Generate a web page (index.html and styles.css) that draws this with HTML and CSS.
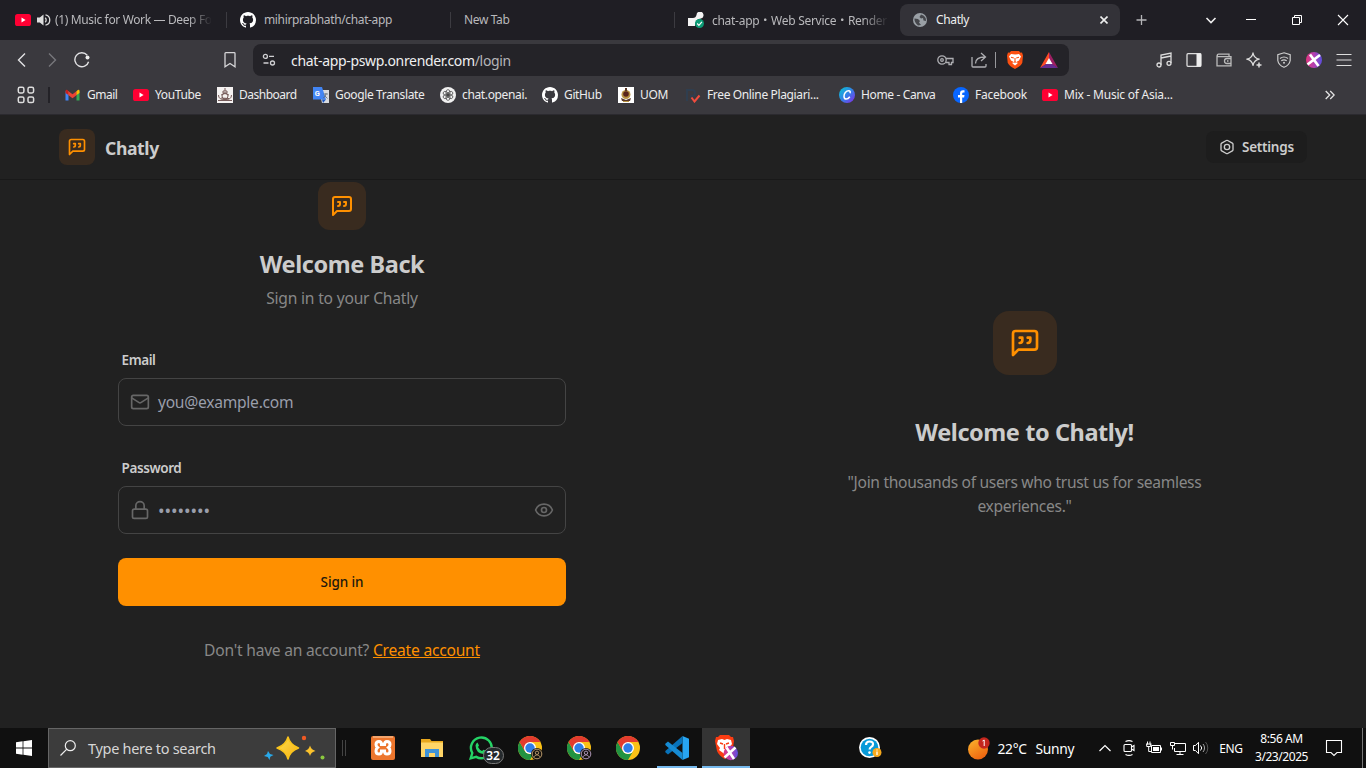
FILE: index.html
```html
<!DOCTYPE html>
<html lang="en">
<head>
<meta charset="utf-8">
<title>Chatly</title>
<link rel="stylesheet" href="styles.css">
</head>
<body>
<svg class="defs" aria-hidden="true">
  <symbol id="yt" viewBox="0 0 16 16"><rect y="2" width="16" height="12" rx="2.6" fill="#ff0033"/><path d="M6.5 5.6 10.6 8l-4.1 2.4z" fill="#fff"/></symbol>
  <symbol id="gh" viewBox="0 0 16 16"><path fill="#fff" d="M8 0C3.58 0 0 3.58 0 8c0 3.54 2.29 6.53 5.47 7.59.4.07.55-.17.55-.38 0-.19-.01-.82-.01-1.49-2.01.37-2.53-.49-2.69-.94-.09-.23-.48-.94-.82-1.13-.28-.15-.68-.52-.01-.53.63-.01 1.08.58 1.23.82.72 1.21 1.87.87 2.33.66.07-.52.28-.87.51-1.07-1.78-.2-3.64-.89-3.64-3.95 0-.87.31-1.59.82-2.15-.08-.2-.36-1.02.08-2.12 0 0 .67-.21 2.2.82.64-.18 1.32-.27 2-.27s1.36.09 2 .27c1.53-1.04 2.2-.82 2.2-.82.44 1.1.16 1.92.08 2.12.51.56.82 1.27.82 2.15 0 3.07-1.87 3.75-3.65 3.95.29.25.54.73.54 1.48 0 1.07-.01 1.93-.01 2.2 0 .21.15.46.55.38A8.01 8.01 0 0 0 16 8c0-4.42-3.58-8-8-8z"/></symbol>
  <symbol id="quote" viewBox="0 0 24 24"><g fill="none" stroke="currentColor" stroke-width="2" stroke-linecap="round" stroke-linejoin="round"><path d="M21 15a2 2 0 0 1-2 2H7l-4 4V5a2 2 0 0 1 2-2h14a2 2 0 0 1 2 2z"/><path d="M8 12a2 2 0 0 0 2-2V8H8"/><path d="M14 12a2 2 0 0 0 2-2V8h-2"/></g></symbol>
  <symbol id="chrome" viewBox="0 0 24 24"><circle cx="12" cy="12" r="12" fill="#fbc116"/><path d="M1.6 6 6.8 15a6 6 0 0 0 10.4 0L12 24A12 12 0 0 1 1.6 6z" fill="#229342"/><path d="M22.4 6H12L6.800 15 1.6 6A12 12 0 0 1 22.4 6z" fill="#e33b2e"/><circle cx="12" cy="12" r="6" fill="#fff"/><circle cx="12" cy="12" r="4.7" fill="#2f7de9"/></symbol>
  <symbol id="face" viewBox="0 0 12 12"><circle cx="6" cy="6" r="6" fill="#171310"/><circle cx="6" cy="6" r="4.8" fill="none" stroke="currentColor"/><circle cx="6" cy="4.8" r="1.7" fill="none" stroke="currentColor"/><path d="M3 9.3c.6-3.2 5.400-3.200 6 0" fill="none" stroke="currentColor"/></symbol>
  <linearGradient id="gPurple" x1="0" y1="0" x2="1" y2="0"><stop offset="0" stop-color="#e0357e"/><stop offset=".5" stop-color="#b33fb0"/><stop offset="1" stop-color="#5b4ee0"/></linearGradient>
  <linearGradient id="gCanva" x1="0" y1="0" x2="1" y2="1"><stop offset="0" stop-color="#05c7cf"/><stop offset=".5" stop-color="#3480e8"/><stop offset="1" stop-color="#8a25e6"/></linearGradient>
  <linearGradient id="gSun" x1="0" y1="0" x2=".6" y2="1"><stop offset="0" stop-color="#fbb52d"/><stop offset="1" stop-color="#ee6510"/></linearGradient>
  <linearGradient id="gStar" x1="0" y1="0" x2="1" y2="1"><stop offset="0" stop-color="#ffe04e"/><stop offset="1" stop-color="#f6ae12"/></linearGradient>
</svg>

<div class="tabs">
  <div class="tab tab-a"><svg width="16" height="16"><use href="#yt"/></svg><svg class="snd" width="14" height="14" viewBox="0 0 14 14"><path d="M0 4.500h2.800L6.500 1.500v11L2.800 9.500H0z" fill="#ddd"/><path d="M8.200 4.800a3 3 0 0 1 0 4.400M8.500 1.800a5.300 5.300 0 0 1 0 10.400" fill="none" stroke="#ddd" stroke-width="1.300"/></svg><span class="fade t-music">(1) Music for Work — Deep Fo</span></div>
  <div class="tab tab-b"><svg width="16" height="16"><use href="#gh"/></svg><span class="t-repo">mihirprabhath/chat-app</span></div>
  <div class="tab tab-c"><span class="t-new">New Tab</span></div>
  <div class="tab tab-d"><svg width="16" height="16" viewBox="0 0 16 16"><path d="M0 6h5c2 0 3-1 3.500-3A3.500 3.500 0 1 1 13 6.500C10 7 7.500 8 7 14H0z" fill="#f4f4f4"/><circle cx="11.500" cy="11.500" r="4.500" fill="#0b9b75"/><path d="m9.200 11.500 1.700 1.800 3-3.500" fill="none" stroke="#fff" stroke-width="1.200"/></svg><span class="fade t-render">chat-app・Web Service・Render</span></div>
  <div class="tab active"><svg width="14" height="14" viewBox="0 0 14 14"><circle cx="7" cy="7" r="7" fill="#9aa0a6"/><path d="M1.500 5.500 5 6l2 2-1 1.500 2 2.500-3 .500Q1 9 1.500 5.500zM8 1.500 6.500 4 8 5.500l2-.500.500 2.500L13 8q.500-5-5-6.500z" fill="#45464b"/></svg><span class="t-chatly">Chatly</span><svg class="x" width="8" height="8" viewBox="0 0 8 8"><path d="m.5.500 7 7m0-7-7 7" stroke="#eee" stroke-width="1.600"/></svg></div>
  <div class="winctl">
    <svg width="12" height="12" viewBox="0 0 12 12"><path d="M6.500 1v10M1.500 6h10" stroke="#b5b5b8" stroke-width="1.300"/></svg>
    <svg width="12" height="12" viewBox="0 0 12 12"><path d="m1.500 4 4.500 4.500L10.500 4" fill="none" stroke="#eee" stroke-width="1.600"/></svg>
    <svg width="12" height="12" viewBox="0 0 12 12"><path d="M1 5.500h10" stroke="#fff"/></svg>
    <svg width="12" height="12" viewBox="0 0 12 12"><path d="M1.500 3.500h7v7h-7zM3.500 3.500v-2h7v7h-2" fill="none" stroke="#fff"/></svg>
    <svg width="12" height="12" viewBox="0 0 12 12"><path d="m1 1 10 10M11 1 1 11" stroke="#fff" stroke-width="1.100"/></svg>
  </div>
</div>

<div class="toolbar">
  <div class="nav">
    <svg width="16" height="16" viewBox="0 0 16 16"><path d="M11 1.500 4.500 8l6.500 6.500" fill="none" stroke="#e2e2e4" stroke-width="1.400"/></svg>
    <svg width="16" height="16" viewBox="0 0 16 16"><path d="m5 1.500 6.500 6.500L5 14.500" fill="none" stroke="#77777c" stroke-width="1.400"/></svg>
    <svg width="16" height="16" viewBox="0 0 16 16"><path d="M13.200 3.200A7 7 0 1 0 14.600 9.700" fill="none" stroke="#e2e2e4" stroke-width="1.400"/><circle cx="13.500" cy="5.500" r="2" fill="#eee"/></svg>
    <svg class="bm" width="16" height="16" viewBox="0 0 16 16"><path d="M3 1.500q0-.8.8-.8h8.400q.8 0 .8.8v13.200L8 11.500l-5 3.200z" fill="none" stroke="#d5d5d7" stroke-width="1.300"/></svg>
  </div>
  <div class="omni">
    <svg width="14" height="14" viewBox="0 0 14 14"><g fill="none" stroke="#cfcfd2" stroke-width="1.300"><circle cx="3.400" cy="3.400" r="2"/><path d="M7 3.400h5M1.500 10h5"/><circle cx="10.500" cy="10" r="2"/></g></svg>
    <span class="url">chat-app-pswp.onrender.com<i>/login</i></span>
    <svg width="17" height="12" viewBox="0 0 17 12"><g fill="none" stroke="#aeaeb2" stroke-width="1.300"><circle cx="5" cy="6" r="4.200"/><circle cx="5" cy="6" r="1.300"/><path d="M9 4.500h7v4h-1.500v2h-2.500v-2H9"/></g></svg>
    <svg class="share" width="17" height="16" viewBox="0 0 17 16"><path d="M1 5v9q0 1 1 1h12q1 0 1-1v-2M4.500 11.500c0-4.500 3-6.500 9.500-6.500m-4-4 4.500 4L10 9" fill="none" stroke="#aeaeb2" stroke-width="1.300"/></svg>
    <b class="bar"></b>
    <svg class="brave" width="16" height="18" viewBox="0 0 16 18"><path d="M4 0h8l1.500 1.700 1.500-.2 1 3-.700 7.300Q14 15 8 18 2 15 .700 11.800L0 4.500l1-3 1.500.200z" fill="#fb5012"/><path d="m4 3 4 .500L12 3l2 2.500-2 4-2 1 .500 2L8 14.500l-2.500-2 .5-2-2-1-2-4z" fill="#fff"/><path d="m4 6.300 2.800.700M12 6.300 9.200 7M8 7v3.500M6.500 11.500l1.500-.7 1.500.7" stroke="#fb5012" stroke-width="1.100" fill="none"/></svg>
    <svg class="bat" width="18" height="16" viewBox="0 0 18 16"><path d="M9 0 0 16l9-5.500z" fill="#ff4b25"/><path d="m9 0 9 16-9-5z" fill="#9e1f63"/><path d="M0 16h18l-9-6z" fill="#662d91"/><path d="m9 6 3.500 6h-7z" fill="#fff"/></svg>
  </div>
  <div class="ext">
    <svg width="16" height="16" viewBox="0 0 16 16"><g fill="none" stroke="#ddd" stroke-width="1.300"><path d="M5 13V3l10-2v10M5 6l10-2"/><circle cx="3" cy="13" r="2"/><circle cx="13" cy="11.300" r="2"/></g></svg>
    <svg width="16" height="16" viewBox="0 0 16 16"><rect x="1" y="1.700" width="14" height="12.600" rx="1" fill="none" stroke="#ddd" stroke-width="1.300"/><path d="M10.500 1.500H15v13h-4.500z" fill="#eee"/></svg>
    <svg width="16" height="16" viewBox="0 0 16 16"><g fill="none" stroke="#bbb" stroke-width="1.300"><path d="M13 4.500V2.200H2.500a1.200 1.200 0 0 0 0 2.400H15v9.200H1V3.500"/><path d="M15 6.500h-4a2 2 0 0 0 0 5h4M11 9h1.500"/></g></svg>
    <svg width="16" height="16" viewBox="0 0 16 16"><path d="M7 1Q8 6.200 13.200 7.200 8 8.200 7 13.400 6 8.200.8 7.200 6 6.200 7 1z" fill="none" stroke="#ddd" stroke-width="1.300" stroke-linejoin="round"/><path d="M13 10.500v5M10.500 13h5" stroke="#ddd" stroke-width="1.500"/></svg>
    <svg width="16" height="16" viewBox="0 0 16 16"><path d="m8 .800 6.200 2v5.700Q13.500 13 8 15.300 2.500 13 1.800 8.500V2.800z" fill="none" stroke="#ccc" stroke-width="1.200"/><path d="M4 6.500q4-3 8 0M5.300 8.800q2.700-2 5.400 0" fill="none" stroke="#ccc" stroke-width="1.200"/><circle cx="8" cy="10.700" r="1" fill="#ccc"/></svg>
    <svg width="16" height="16" viewBox="0 0 16 16"><circle cx="8" cy="8" r="8" fill="url(#gPurple)"/><path d="m4 2.500 8.500 11.500M14 3 1.500 12.500" stroke="#fff" stroke-width="2.700"/></svg>
    <svg width="16" height="16" viewBox="0 0 16 16"><path d="M.5 2.500h15M.5 8h15M.5 13.500h15" stroke="#ddd" stroke-width="1.200"/></svg>
  </div>
</div>

<div class="bookmarks">
  <svg class="apps" width="18" height="18" viewBox="0 0 18 18"><g fill="none" stroke="#ddd" stroke-width="1.500"><rect x="1.300" y="1.300" width="5.600" height="5.600" rx="1.600"/><rect x="11" y="1.300" width="5.600" height="5.600" rx="1.600"/><rect x="1.300" y="11" width="5.600" height="5.600" rx="1.600"/><rect x="11" y="11" width="5.600" height="5.600" rx="1.600"/></g></svg>
  <b class="bsep"></b>
  <div class="bk"><svg width="16" height="16" viewBox="0 0 16 16"><path d="M.5 4v9.500h3V7z" fill="#4285f4"/><path d="M11.500 7v6.500h3V4z" fill="#34a853"/><path d="M.5 4V6l3 2V4.500L2.500 3Q.5 2.300.5 4z" fill="#c5221f"/><path d="M3.200 3.900 7.500 7.300l4.300-3.400V8L7.500 11.300 3.200 8z" fill="#ea4335"/><path d="M11.500 4.200V8l3-2V4Q14.500 2.300 12.800 3z" fill="#fbbc04"/></svg><span class="k1">Gmail</span></div>
  <div class="bk"><svg width="16" height="16"><use href="#yt"/></svg><span class="k2">YouTube</span></div>
  <div class="bk"><svg width="16" height="16" viewBox="0 0 16 16"><path fill="#f5f2f1" d="M0 0h16v16H0z"/><g fill="none" stroke="#765b5a"><path d="M8 1v3M6 4h4v2H6zM4 8q4-3 8 0"/><circle cx="8" cy="9" r="3"/><path d="M1.500 8q0 5 6.500 4.500Q14.500 13 14.500 8M1 13.500h14M4 11l8 .5"/></g></svg><span class="k3">Dashboard</span></div>
  <div class="bk"><svg width="16" height="16" viewBox="0 0 16 16"><path d="M6 3h10v13H9z" fill="#d8dade"/><path d="M0 0h9l4 12.500H0z" fill="#4285f4"/><path d="M9 12.500h4L10 16z" fill="#1a57c4"/><text x="1.800" y="9" font-size="7.500" font-weight="700" font-family="Roboto, sans-serif" fill="#fff">G</text><path d="M10.500 7h4.500M13 6v1q-.5 3-3 4M11.500 8.500l3 3" stroke="#5e6a76" fill="none" stroke-width=".8"/></svg><span class="k4">Google Translate</span></div>
  <div class="bk"><svg width="16" height="16" viewBox="0 0 16 16"><circle cx="8" cy="8" r="8" fill="#f1f1f1"/><g fill="none" stroke="#444" stroke-width=".75"><ellipse cx="8" cy="5.600" rx="2" ry="3"/><ellipse cx="8" cy="5.600" rx="2" ry="3" transform="rotate(60 8 8)"/><ellipse cx="8" cy="5.600" rx="2" ry="3" transform="rotate(120 8 8)"/><ellipse cx="8" cy="5.600" rx="2" ry="3" transform="rotate(180 8 8)"/><ellipse cx="8" cy="5.600" rx="2" ry="3" transform="rotate(240 8 8)"/><ellipse cx="8" cy="5.600" rx="2" ry="3" transform="rotate(300 8 8)"/></g></svg><span class="k5">chat.openai.</span></div>
  <div class="bk"><svg width="16" height="16"><use href="#gh"/></svg><span class="k6">GitHub</span></div>
  <div class="bk"><svg width="16" height="16" viewBox="0 0 16 16"><path fill="#fff" d="M0 0h16v16H0z"/><circle cx="8" cy="7.500" r="4.500" fill="#b99442"/><circle cx="8" cy="7" r="2.800" fill="#59251a"/><path d="M7 1h2v3H7zM3 11l5 2 5-2-1 3H4z" fill="#5a3827"/><path d="M5 14.500h6" stroke="#b99442"/></svg><span class="k7">UOM</span></div>
  <div class="bk"><svg width="16" height="16" viewBox="0 0 16 16"><path d="M2 14V3h5q3 0 3 3t-3 3H5" fill="none" stroke="#2f3e4f" stroke-width="2"/><path d="m6.500 10.500 3 4 5-6" fill="none" stroke="#f04c3e" stroke-width="2"/></svg><span class="k8">Free Online Plagiari...</span></div>
  <div class="bk"><svg width="16" height="16" viewBox="0 0 16 16"><circle cx="8" cy="8" r="8" fill="url(#gCanva)"/><path d="M11 6.300q.8-2.600-1.300-2.600C7 3.700 5 6.500 5 9.200q0 2.900 2.200 2.900 2 0 3.600-2.300" fill="none" stroke="#fff" stroke-width="1.500"/></svg><span class="k9">Home - Canva</span></div>
  <div class="bk"><svg width="16" height="16" viewBox="0 0 16 16"><circle cx="8" cy="8" r="8" fill="#0866ff"/><path d="M7 16v-5.500H5V8h2V6.400Q7 3.200 10 3.200h1.500v2.200h-1.200q-1.100 0-1.100 1.200V8h2.300l-.4 2.500H9.200V16z" fill="#fff"/></svg><span class="k10">Facebook</span></div>
  <div class="bk"><svg width="16" height="16"><use href="#yt"/></svg><span class="k11">Mix - Music of Asia...</span></div>
  <svg class="more" width="10" height="10" viewBox="0 0 10 10"><path d="m.7 1 4 4-4 4M5.200 1l4 4-4 4" fill="none" stroke="#e5e5e5" stroke-width="1.300"/></svg>
</div>

<main class="page">
  <header class="head">
    <div class="tile small"><svg width="20" height="20"><use href="#quote"/></svg></div>
    <h1>Chatly</h1>
    <button class="settings"><svg width="16" height="16" viewBox="0 0 24 24" fill="none" stroke="currentColor" stroke-width="2"><path d="M21 16V8a2 2 0 0 0-1-1.730l-7-4a2 2 0 0 0-2 0l-7 4A2 2 0 0 0 3 8v8a2 2 0 0 0 1 1.730l7 4a2 2 0 0 0 2 0l7-4A2 2 0 0 0 21 16z"/><circle cx="12" cy="12" r="4"/></svg><span>Settings</span></button>
  </header>
  <div class="cols">
    <section class="login">
      <div class="tile mid"><svg width="24" height="24"><use href="#quote"/></svg></div>
      <h2 class="wb">Welcome Back</h2>
      <p class="sub">Sign in to your Chatly</p>
      <label class="l1">Email</label>
      <div class="field"><svg width="20" height="20" viewBox="0 0 24 24" fill="none" stroke="currentColor" stroke-width="2" stroke-linecap="round" stroke-linejoin="round"><rect width="20" height="16" x="2" y="4" rx="2"/><path d="m22 7-8.970 5.700a1.940 1.940 0 0 1-2.060 0L2 7"/></svg><span class="ph">you@example.com</span></div>
      <label class="l2">Password</label>
      <div class="field"><svg width="20" height="20" viewBox="0 0 24 24" fill="none" stroke="currentColor" stroke-width="2" stroke-linecap="round" stroke-linejoin="round"><rect width="18" height="11" x="3" y="11" rx="2"/><path d="M7 11V7a5 5 0 0 1 10 0v4"/></svg><span class="dots">••••••••</span><svg class="eye" width="20" height="20" viewBox="0 0 24 24" fill="none" stroke="currentColor" stroke-width="2" stroke-linecap="round" stroke-linejoin="round"><path d="M2.062 12.348a1 1 0 0 1 0-.696 10.750 10.750 0 0 1 19.876 0 1 1 0 0 1 0 .696 10.750 10.750 0 0 1-19.876 0"/><circle cx="12" cy="12" r="3"/></svg></div>
      <button class="signin"><span>Sign in</span></button>
      <p class="create">Don't have an account? <a>Create account</a></p>
    </section>
    <section class="promo">
      <div class="tile big"><svg width="32" height="32"><use href="#quote"/></svg></div>
      <h2 class="wc">Welcome to Chatly!</h2>
      <p class="join"><span class="j1">"Join thousands of users who trust us for seamless</span><br><span class="j2">experiences."</span></p>
    </section>
  </div>
</main>

<footer class="taskbar">
  <div class="start"><svg width="16" height="16" viewBox="0 0 16 16"><path d="M0 2.200 6.600 1.300v6.300H0zM7.400 1.200 16 0v7.600H7.400zM0 8.400h6.600v6.300L0 13.800zM7.400 8.400H16V16l-8.600-1.200z" fill="#fff"/></svg></div>
  <div class="search">
    <svg width="16" height="16" viewBox="0 0 16 16"><circle cx="10.300" cy="5.700" r="5" fill="none" stroke="#eee" stroke-width="1.200"/><path d="m6.800 9.200-6.300 6.300" stroke="#eee" stroke-width="1.200"/></svg>
    <span>Type here to search</span>
    <svg class="stars" width="62" height="26" viewBox="0 0 62 26"><path d="M24 2q2 8 10.500 11Q26 16 24 24q-2-8-11-11Q22 10 24 2z" fill="url(#gStar)" stroke="#f9c31c" stroke-width="1.500" stroke-linejoin="round"/><path d="M46 10.500q1 4 5.500 5.500-4.500 1-5.500 5-1-4-5-5 4-1.500 5-5.500z" fill="#fbc22c"/><path d="m4 16 2 3 3.500 1-3.200 1.800L5.500 25 3.700 22 0 21l3-2z" fill="#29a9ea"/><circle cx="40" cy="3" r="2.200" fill="#f05a24"/><circle cx="58.500" cy="22.500" r="2" fill="#8bc83f"/></svg>
  </div>
  <svg class="grip" width="4" height="16" viewBox="0 0 4 16"><path d="M.5 0v16M3.500 0v16" stroke="#444"/></svg>
  <div class="approw">
    <div class="app"><svg width="24" height="24" viewBox="0 0 24 24"><rect width="24" height="24" rx="2" fill="#ed762d"/><path d="M2 1h20" stroke="#f3a46c" stroke-width="2"/><path d="M8 5.500q2.500 0 2.500 3h3q0-3 2.500-3 3 0 3 3 0 1.800-1.500 3 1.500 1.200 1.500 3.500 0 3-3 3-2.500 0-2.500-3h-3q0 3-2.500 3-3 0-3-3 0-2.300 1.500-3.500Q5 10.300 5 8.500q0-3 3-3z" fill="none" stroke="#fff" stroke-width="3"/></svg></div>
    <div class="app"><svg width="24" height="24" viewBox="0 0 24 24"><path d="M1 3h9l1.500 2H23v16H1z" fill="#e8a71d"/><path d="M1 6.500h22V21H1z" fill="#ffd567"/><path d="M5 13h14v8h-4v-4H9v4H5z" fill="#3f93d8"/></svg></div>
    <div class="app wa"><svg width="24" height="24" viewBox="0 0 24 24"><path d="M1.700 22.300 3.300 17A10.400 10.400 0 1 1 7.200 20.900z" fill="#111" stroke="#25d366" stroke-width="2.400"/><path d="M8.500 6.500 10 9.500 9 11q1.500 3 4 4l1.500-1.300 3 1.300q-.5 3-3 3Q7 17.500 6.500 9.500q.3-2 2-3z" fill="#25d366"/></svg><em>32</em></div>
    <div class="app"><svg width="24" height="24"><use href="#chrome"/></svg><svg class="who w1" width="12" height="12"><use href="#face"/></svg></div>
    <div class="app"><svg width="24" height="24"><use href="#chrome"/></svg><svg class="who w2" width="12" height="12"><use href="#face"/></svg></div>
    <div class="app"><svg width="24" height="24"><use href="#chrome"/></svg></div>
    <div class="app run"><svg width="24" height="24" viewBox="0 0 24 24"><path d="M17.500 0 24 2.800v18.400L17.500 24z" fill="#27a5f2"/><path d="M17.500 0v7L3 18.500.3 16.300v-1.200z" fill="#0872b9"/><path d="M17.500 24v-7L3 5.500.3 7.700v1.200z" fill="#168bd3"/></svg></div>
    <div class="app cur"><svg width="24" height="26" viewBox="0 0 24 26"><path d="M6 0h9l2 2h2l1 4-1.500 10Q17 20 10.500 24q-6-4-7.500-8L1 6l1-4h2z" fill="#fb3c12"/><path d="m4 5 4-1 2.500 1L13 4l4 1 1 4-3 4 1 2-5.500 4L5 15l1-2-3-4z" fill="#fff"/><path d="m6 8 3 1m6-1-3 1m-1.500 0v5" stroke="#fb3c12" stroke-width="1.400"/><circle cx="16.800" cy="18" r="7.200" fill="url(#gPurple)"/><path d="m12.500 12.500 7.500 11.500M21.500 12.500l-11 10" stroke="#fff" stroke-width="2.600"/></svg></div>
  </div>
  <svg class="help" width="23" height="22" viewBox="0 0 23 22"><circle cx="10.500" cy="10.500" r="10.500" fill="#fff"/><circle cx="10.500" cy="10.500" r="8.800" fill="#079ad9"/><path d="M7 8q0-3.500 3.600-3.500T14 7.500q0 1.500-2 2.600-1.400.9-1.400 2.400" stroke="#fff" stroke-width="2.200" fill="none"/><circle cx="10.500" cy="15.600" r="1.300" fill="#fff"/><circle cx="18" cy="15.500" r="4.500" fill="#f6a81c"/><path d="M18 12.500v1M18 14.500v3.500" stroke="#fff" stroke-width="1.300"/></svg>
  <div class="weather"><svg width="22" height="23" viewBox="0 0 22 23"><circle cx="10" cy="12.500" r="10" fill="url(#gSun)"/><circle cx="16" cy="6" r="5.700" fill="#c4261d"/><path d="m14.500 4 1.700-1v6" stroke="#fff" fill="none"/></svg><span class="deg">22°C</span><span class="sun">Sunny</span></div>
  <div class="tray">
    <svg width="14" height="14" viewBox="0 0 14 14"><path d="m1.500 10 5.500-5.500 5.500 5.500" fill="none" stroke="#fff" stroke-width="1.200"/></svg>
    <svg width="16" height="16" viewBox="0 0 16 16"><g fill="none" stroke="#fff" stroke-width="1.100"><rect x="3" y="4.500" width="7.500" height="7" rx="1"/><path d="m10.500 7 2.500-1.500v5L10.500 9M4.500 1.500q3.500-1.800 7 0M4.500 14.500q3.500 1.800 7 0"/></g></svg>
    <svg width="16" height="16" viewBox="0 0 16 16"><path d="M5.500 5.500h9v7h-9z" fill="none" stroke="#fff"/><path d="M7 7h6v4H7zM14.500 7.500H16v3h-1.500z" fill="#fff"/><path d="M1.500 1.500v3M4 1.500v3M0 4h5.500M.7 4v2.500h4V4M2.700 6.500v5h3" fill="none" stroke="#fff"/></svg>
    <svg width="16" height="16" viewBox="0 0 16 16"><path d="M5 3.500h10.500v8h-11V8M10 11.500v3M6.500 14.500h7M.5 2.500h4v3h-4zM2.500 5.500v4" fill="none" stroke="#fff"/></svg>
    <svg width="16" height="16" viewBox="0 0 16 16"><path d="M.5 5.500H2.500l3-3.200v11.400l-3-3.200H.500z" fill="none" stroke="#fff"/><path d="M7.500 5.500a3.500 3.500 0 0 1 0 5" fill="none" stroke="#fff"/><path d="M10 4a6 6 0 0 1 0 8" fill="none" stroke="#aaa"/><path d="M12.500 2a9 9 0 0 1 0 12" fill="none" stroke="#555"/></svg>
    <span class="eng">ENG</span>
    <div class="clock"><span class="time">8:56 AM</span><span class="date">3/23/2025</span></div>
    <svg class="note" width="18" height="18" viewBox="0 0 18 18"><path d="M1.500 1.500h15v12H12l-3 3-3-3H1.500z" fill="none" stroke="#fff" stroke-width="1.100"/></svg>
    <b class="peek"></b>
  </div>
</footer>
</body>
</html>
```
FILE: styles.css
```css
* { box-sizing: border-box; }
body { margin: 0; width: 1366px; height: 768px; overflow: hidden; display: flex; flex-direction: column; background: #212121; font-family: "Noto Sans", "Noto Sans CJK JP", sans-serif; color: #ccc; }
svg { display: block; flex: none; }
span, h1, h2, p, label { white-space: nowrap; }
h1, h2, p { margin: 0; }
button { border: 0; font: inherit; }
.defs { position: absolute; width: 0; height: 0; }

.tabs { height: 40px; flex: none; display: grid; grid-template-columns: 227px 224px 224px 225px 220px 1fr; background: #1f1e24; font-size: 12px; letter-spacing: -.36px; color: #b9b9bc; }
.tab { display: flex; align-items: center; min-width: 0; height: 40px; background: linear-gradient(#3c3b41, #3c3b41) right 12px / 1px 16px no-repeat; }
.tab span { margin-top: -1px; }
.tab-a { padding-left: 15px; }
.tab-a .snd { margin: 0 4px 0 6px; }
.fade { overflow: hidden; -webkit-mask-image: linear-gradient(90deg, #000 85%, transparent); mask-image: linear-gradient(90deg, #000 85%, transparent); }
.t-music { width: 157px; }
.tab-b { padding-left: 13px; gap: 8px; }
.tab-c { padding-left: 13px; }
.tab-d { padding-left: 13px; gap: 8px; background: none; }
.t-render { width: 177px; letter-spacing: -.28px; }
.tab.active { height: 32px; margin-top: 4px; border-radius: 8px; background: #333238; padding: 0 12px 0 13px; gap: 9px; color: #f0f0f1; }
.active .x { margin-left: auto; }
.winctl { display: grid; grid-template-columns: 42px 98px 45px 45px 16px; justify-items: center; align-items: center; }
.winctl svg:nth-child(3) { justify-self: start; margin-left: -15px; }
.winctl svg:nth-child(4) { justify-self: start; margin-left: -14px; }
.winctl svg:nth-child(5) { justify-self: start; margin-left: -13px; }

.toolbar { height: 36px; flex: none; display: flex; background: #3a393e; align-items: center; padding-top: 4px; }
.nav { display: flex; align-items: center; width: 253px; padding-left: 14px; gap: 14px; }
.nav .bm { margin-left: 118px; }
.omni { width: 816px; height: 32px; border-radius: 8px; background: #242328; display: flex; align-items: center; padding-left: 9px; }
.url { margin-left: 15px; width: 646px; font-size: 14px; letter-spacing: -.33px; color: #efeff0; }
.url i { font-style: normal; color: #b5b5b8; }
.omni .share { margin-left: 17px; }
.bar { width: 1px; height: 16px; background: #98989c; margin-left: 7px; }
.brave { margin-left: 11px; }
.bat { margin-left: 17px; }
.ext { display: flex; gap: 14px; margin-left: 87px; }

.bookmarks { height: 39px; flex: none; display: grid; grid-template-columns: 48px 17px 68px 84px 96px 127px 102px 76px 67px 154px 114px 89px 283px 1fr; align-items: center; background: #3a393e; border-bottom: 1px solid #2b2a2f; color: #ececed; font-size: 12px; letter-spacing: -.36px; }
.apps { margin-left: 17px; }
.bsep { width: 2px; height: 16px; background: #232227; }
.bk { display: flex; align-items: center; gap: 6px; }
.bk span { margin-top: -2px; }
.k11, .k10 { letter-spacing: -.23px; }
.k1, .k3 { letter-spacing: -.5px; }

.page { height: 613px; flex: none; background: #212121; }
.head { height: 65px; border-bottom: 1px solid #191919; display: flex; align-items: center; padding: 0 59px; }
.tile { display: flex; align-items: center; justify-content: center; background: #392b1f; color: #ff9000; }
.small { width: 36px; height: 36px; border-radius: 8px; }
.mid { width: 48px; height: 48px; border-radius: 12px; }
.big { width: 64px; height: 64px; border-radius: 16px; }
.head h1 { font-size: 17.600px; letter-spacing: -.4px; font-weight: 700; margin: 1px 0 0 10px; line-height: 28px; }
.settings { margin-left: auto; width: 101px; height: 32px; border-radius: 8px; background: #1d1d1d; color: #ccc; display: flex; align-items: center; padding: 0 0 0 13px; gap: 7px; font-size: 13.500px; letter-spacing: -.25px; font-weight: 600; }
.cols { display: grid; grid-template-columns: 683px 683px; height: 548px; }
.login { padding: 2px 117px 0 118px; display: flex; flex-direction: column; }
.login .mid { align-self: center; }
.login h2, .promo h2 { font-size: 23.500px; letter-spacing: -.42px; font-weight: 700; line-height: 32px; text-align: center; }
.wb { margin-top: 18px; }
.sub { margin-top: 6px; font-size: 15.600px; letter-spacing: -.2px; line-height: 24px; color: #888; text-align: center; }
.login label { font-size: 13.500px; letter-spacing: -.4px; font-weight: 600; line-height: 20px; margin: 40px 0 8px 3.500px; }
.login .l2 { margin-top: 32px; }
.field { height: 48px; border: 1px solid #444; border-radius: 8px; display: flex; align-items: center; padding: 0 11px; color: #676767; }
.field span { margin-left: 8px; font-size: 15.600px; letter-spacing: -.26px; color: #9a9eab; }
.field .dots { font-size: 17.500px; letter-spacing: -.08px; }
.field .eye { margin-left: auto; }
.signin { margin-top: 24px; height: 48px; border-radius: 8px; background: #ff9000; color: #20180d; font-size: 13.500px; letter-spacing: -.1px; font-weight: 500; text-align: center; }
.create { margin-top: 32px; font-size: 15.600px; letter-spacing: -.22px; line-height: 24px; color: #888; text-align: center; }
.create a { color: #ff9000; text-decoration: underline; }
.promo { display: flex; flex-direction: column; align-items: center; padding-top: 131px; }
.wc { margin-top: 41px; }
.join { margin-top: 22px; font-size: 15.600px; letter-spacing: -.32px; line-height: 24px; color: #888; text-align: center; }

.taskbar { height: 40px; flex: none; display: flex; align-items: center; background: #101010; color: #fff; }
.start { width: 48px; display: flex; justify-content: center; }
.search { width: 288px; height: 40px; background: #3c3c3c; border: 1px solid #656565; display: flex; align-items: center; padding-left: 11px; color: #d6d6d6; font-size: 14.500px; letter-spacing: -.3px; }
.search span { margin-left: 12px; width: 176px; }
.grip { margin-left: 6px; }
.approw { display: grid; grid-template-columns: repeat(8, 49px); margin-left: 12.500px; width: 392px; }
.app { height: 40px; width: 49px; display: flex; justify-content: center; align-items: center; position: relative; }
.app em { position: absolute; left: 26px; top: 19px; width: 21px; height: 17px; border-radius: 9px; border: 1px solid #777; background: #24292c; font: 600 12px/15px "Noto Sans", sans-serif; text-align: center; }
.who { position: absolute; left: 25px; top: 20px; }
.w1 { color: #b29567; }
.w2 { color: #a994b4; }
.run { background: linear-gradient(#76b9ed, #76b9ed) center bottom / 40px 2px no-repeat; }
.cur { background: #343434; border-bottom: 2px solid #76b9ed; padding-top: 2px; width: 48px; }
.help { margin-left: 108px; }
.weather { display: flex; align-items: center; margin-left: 86px; font-size: 13.800px; letter-spacing: -.3px; width: 122px; }
.deg { margin-left: 8px; width: 38px; }
.tray { display: grid; grid-template-columns: 23px 25px 24px 24px 23px 37px 64px 41px 1fr; width: 270px; flex: none; align-items: center; justify-items: center; height: 40px; margin-left: 4px; }
.eng { font-size: 12px; letter-spacing: -.4px; }
.clock { display: flex; flex-direction: column; align-items: center; font-size: 12px; letter-spacing: -.45px; line-height: 18px; padding-bottom: 1px; }
.peek { justify-self: start; margin-left: 7px; width: 1px; height: 40px; background: #777; }
```
